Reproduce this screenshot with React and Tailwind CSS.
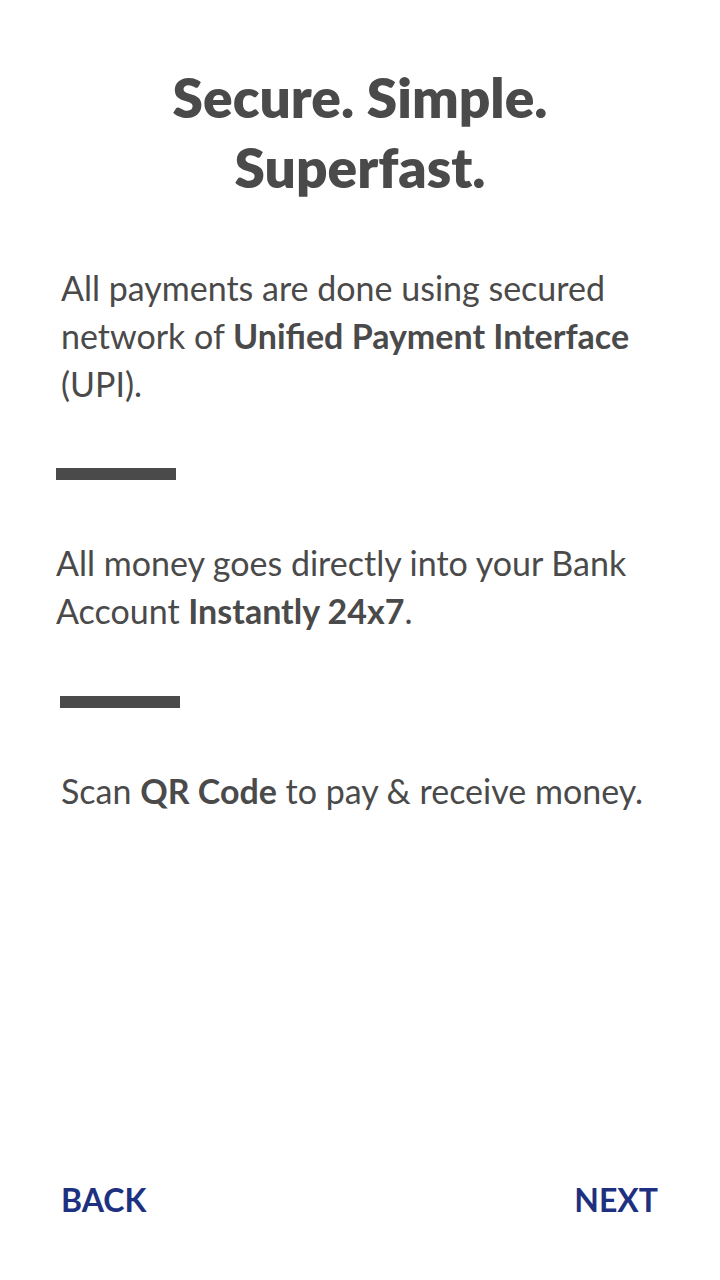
export default function App() {
  return (
    <div
      className="w-[720px] h-[1280px] bg-white flex flex-col text-[#4a4a4a]"
      style={{ fontFamily: "Lato, 'Open Sans', sans-serif" }}
    >
      <h1 className="mt-[62px] text-center font-extrabold text-[55px] leading-[70px]">
        Secure. Simple.
        <br />
        Superfast.
      </h1>

      <p className="mt-[62px] ml-[61px] mr-[50px] text-[34px] leading-[48px]">
        All payments are done using secured network of{" "}
        <span className="font-bold">Unified Payment Interface</span> (UPI).
      </p>

      <div className="mt-[60px] ml-[56px] w-[120px] h-[12px] bg-[#4a4a4a]" />

      <p className="mt-[59px] ml-[56px] mr-[50px] text-[34px] leading-[48px]">
        All money goes directly into your Bank Account{" "}
        <span className="font-bold">Instantly 24x7</span>.
      </p>

      <div className="mt-[61px] ml-[60px] w-[120px] h-[12px] bg-[#4a4a4a]" />

      <p className="mt-[59px] ml-[61px] mr-[40px] text-[34px] leading-[48px]">
        Scan <span className="font-bold">QR Code</span> to pay &amp; receive money.
      </p>

      <div className="flex-1" />

      <div className="flex justify-between items-center px-[61px] pb-[56px] text-[#1e3181] font-bold text-[32px] leading-[48px]">
        <button>BACK</button>
        <button className="mr-[1px]">NEXT</button>
      </div>
    </div>
  );
}
